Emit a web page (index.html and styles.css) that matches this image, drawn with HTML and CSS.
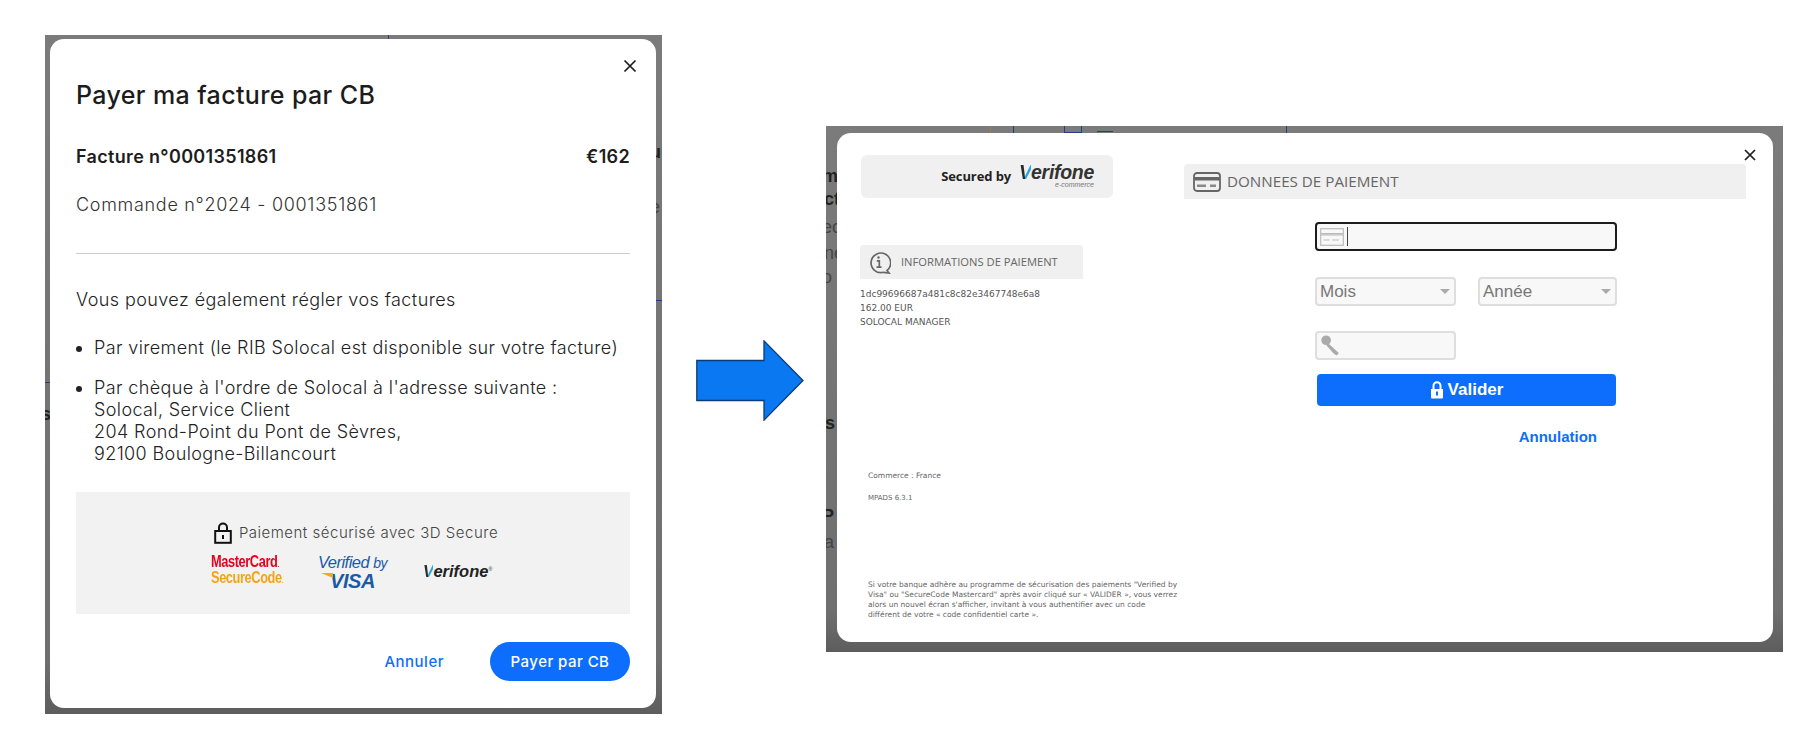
FILE: index.html
```html
<!DOCTYPE html>
<html lang="fr">
<head>
<meta charset="utf-8">
<title>Paiement par CB</title>
<link rel="stylesheet" href="styles.css">
</head>
<body>
<main class="canvas">

  <section class="frame frame-left">
    <i class="bg-mark lm1"></i><i class="bg-mark lm2"></i><i class="bg-mark lm3"></i>
    <span class="bg-text lt1">u</span><span class="bg-text lt2">e</span><span class="bg-text lt3">s</span>
    <div class="modal modal-cb">
      <svg class="close close-cb" viewBox="0 0 14 14"><path d="M1.5 1.5l11 11M12.5 1.5l-11 11"/></svg>
      <h1 class="cb-title">Payer ma facture par CB</h1>
      <div class="invoice-row"><span>Facture n°0001351861</span><span>€162</span></div>
      <p class="order">Commande n°2024 - 0001351861</p>
      <hr class="rule">
      <p class="also">Vous pouvez également régler vos factures</p>
      <ul class="methods">
        <li>Par virement (le RIB Solocal est disponible sur votre facture)</li>
        <li>Par chèque à l'ordre de Solocal à l'adresse suivante :<br>Solocal, Service Client<br>204 Rond-Point du Pont de Sèvres,<br>92100 Boulogne-Billancourt</li>
      </ul>
      <div class="secure-box">
        <div class="secure-line">
          <svg class="lock-icon" viewBox="0 0 18 22"><path d="M5 9V5.500a4 4 0 0 1 8 0V9" fill="none"/><rect x="1.200" y="9" width="15.600" height="11.800" fill="none"/><rect x="8" y="13" width="2" height="4" class="lock-pin"/></svg>
          <span>Paiement sécurisé avec 3D Secure</span>
        </div>
        <div class="logos">
          <div class="logo-mc"><span class="mc-red">MasterCard<small>.</small></span><span class="mc-orange">SecureCode<small>.</small></span></div>
          <div class="logo-visa"><span class="visa-top">Verified <em>by</em></span><span class="visa-bottom"><i class="visa-wedge"></i>VISA</span></div>
          <div class="logo-vf"><b class="vf-v">V</b>erifone<sup>®</sup></div>
        </div>
      </div>
      <div class="cb-actions">
        <a class="cb-cancel">Annuler</a>
        <button class="cb-pay">Payer par CB</button>
      </div>
    </div>
  </section>

  <svg class="arrow" viewBox="0 0 108 81"><path d="M.8 20.500H68V.9L107 40.500 68 80.100V60.500H.8z"/></svg>

  <section class="frame frame-right">
    <i class="bg-mark rm1"></i><i class="bg-mark rm2"></i><i class="bg-mark rm3"></i><i class="bg-mark rm4"></i><i class="bg-mark rm5"></i>
    <span class="bg-text rt1">m</span><span class="bg-text rt2">ct</span><span class="bg-text rt3">ec</span><span class="bg-text rt4">né</span><span class="bg-text rt5">o</span><span class="bg-text rt6">s</span><span class="bg-text rt7">P</span><span class="bg-text rt8">a</span>
    <div class="modal modal-vf">
      <svg class="close close-vf" viewBox="0 0 14 14"><path d="M2 2l10 10M12 2L2 12"/></svg>
      <div class="col-info">
        <div class="secured">
          <span class="secured-by">Secured by</span>
          <div class="secured-logo"><div class="logo-vf-big"><b class="vf-v">V</b>erifone</div><div class="ecom">e-commerce</div></div>
        </div>
        <div class="info-bar">
          <svg class="info-icon" viewBox="0 0 24 24"><path d="M20 20.500a9.800 9.800 0 1 0-3.500 1.800l5.500.7z" fill="none"/><circle cx="11.500" cy="7.500" r="1.200" class="fill"/><path d="M9.800 10.800h2.500v6.200M9.500 17.200h5" fill="none"/></svg>
          <span>INFORMATIONS DE PAIEMENT</span>
        </div>
        <p class="pay-data">1dc99696687a481c8c82e3467748e6a8<br>162.00 EUR<br>SOLOCAL MANAGER</p>
        <p class="commerce">Commerce : France</p>
        <p class="version">MPADS 6.3.1</p>
        <p class="legal">Si votre banque adhère au programme de sécurisation des paiements "Verified by<br>Visa" ou "SecureCode Mastercard" après avoir cliqué sur « VALIDER », vous verrez<br>alors un nouvel écran s'afficher, invitant à vous authentifier avec un code<br>différent de votre « code confidentiel carte ».</p>
      </div>
      <div class="col-form">
        <div class="data-bar">
          <svg class="bar-card" viewBox="0 0 28 20"><rect x="1" y="1" width="26" height="18" rx="3" fill="none"/><rect x="1" y="5" width="26" height="3.500" class="fill"/><rect x="4" y="12.500" width="9" height="2.500" class="fill-light"/><rect x="17" y="12.500" width="6" height="2.500" class="fill-light"/></svg>
          <span>DONNEES DE PAIEMENT</span>
        </div>
        <div class="form">
          <div class="field field-card">
            <svg class="field-card-icon" viewBox="0 0 24 18"><rect x=".7" y=".7" width="22.600" height="16.600" fill="none"/><path d="M1 5.500h22M1 6.800h22M3.500 12h6M12 12h7" fill="none"/></svg>
            <i class="caret"></i>
          </div>
          <div class="field-row">
            <div class="field field-half"><span>Mois</span><i class="tri"></i></div>
            <div class="field field-half field-year"><span>Année</span><i class="tri"></i></div>
          </div>
          <div class="field field-half field-cvv">
            <svg class="key-icon" viewBox="0 0 24 26"><circle cx="7" cy="7" r="5.500"/><path d="M9 10l12.500 11.500-2.500 3-3-2-1.500-1.500-7.500-8.500z"/></svg>
          </div>
          <button class="validate">
            <svg class="validate-lock" viewBox="0 0 14 18"><path d="M3.500 8V4.800a3.500 3.500 0 0 1 7 0V8" fill="none"/><path d="M1 8h12v8.500a1 1 0 0 1-1 1H2a1 1 0 0 1-1-1z" class="solid"/><rect x="6" y="10.500" width="2" height="4" class="pin"/></svg>
            Valider
          </button>
          <a class="annulation">Annulation</a>
        </div>
      </div>
    </div>
  </section>

</main>
</body>
</html>
```

FILE: styles.css
```css
* { box-sizing: border-box; }
html, body { margin: 0; padding: 0; background: #fff; }
.canvas { position: relative; width: 1815px; height: 754px; overflow: hidden; font-family: "Inter", "Liberation Sans", sans-serif; }

.frame { position: absolute; overflow: hidden; background: linear-gradient(#7b7b7b, #6f6f6f 92%, #5d5d5d); }
.frame-left { left: 45px; top: 35px; width: 617px; height: 679px; }
.frame-right { left: 826px; top: 126px; width: 957px; height: 526px; }

.bg-mark { position: absolute; display: block; background: #23407a; }
.lm1 { left: 343px; top: 0; width: 1px; height: 5px; }
.lm2 { left: 0; top: 347px; width: 5px; height: 1px; }
.lm3 { left: 611px; top: 265px; width: 6px; height: 1px; }
.rm1 { left: 164px; top: 0; width: 1px; height: 8px; background: #a08040; }
.rm2 { left: 187px; top: 0; width: 1px; height: 8px; }
.rm3 { left: 238px; top: 0; width: 18px; height: 7px; background: none; border: 1px solid #23407a; border-top: 0; }
.rm4 { left: 271px; top: 5px; width: 16px; height: 1px; }
.rm5 { left: 460px; top: 0; width: 1px; height: 8px; }

.bg-text { position: absolute; font: 600 18px/1 "Liberation Sans", sans-serif; color: #222; }
.lt1 { left: 605px; top: 108px; } .lt2 { left: 605px; top: 163px; color: #444; font-weight: 400; } .lt3 { left: -4px; top: 370px; }
.rt1 { left: -4px; top: 41px; } .rt2 { left: -2px; top: 64px; } .rt3 { left: -4px; top: 92px; color: #444; font-weight: 400; }
.rt4 { left: -2px; top: 118px; color: #444; font-weight: 400; } .rt5 { left: -4px; top: 142px; color: #444; font-weight: 400; }
.rt6 { left: -1px; top: 288px; } .rt7 { left: -4px; top: 381px; } .rt8 { left: -2px; top: 407px; color: #444; font-weight: 400; }

.modal { position: absolute; background: #fff; border-radius: 14px; }
.close { position: absolute; fill: none; stroke: #1d1d1d; stroke-width: 1.700; }

/* Solocal modal */
.modal-cb { left: 5px; top: 4px; width: 606px; height: 669px; padding: 0 26px; color: #222; }
.close-cb { left: 573px; top: 20px; width: 14px; height: 14px; }
.cb-title { margin: 40px 0 0; font-size: 25px; line-height: 32px; font-weight: 500; color: #1c1c1c; letter-spacing: .38px; }
.invoice-row { display: flex; justify-content: space-between; margin-top: 33px; font-size: 18px; line-height: 26px; font-weight: 600; color: #1d1d1d; letter-spacing: .33px; }
.order { margin: 22px 0 0; font-size: 18px; line-height: 26px; font-weight: 300; color: #333; letter-spacing: .7px; }
.rule { margin: 35px 0 0; border: 0; height: 1px; background: #ccc; }
.also { margin: 33px 0 0; font-size: 18px; line-height: 26px; font-weight: 300; color: #222; letter-spacing: .42px; }
.methods { margin: 24px 0 0; padding: 0 0 0 18px; font-size: 18px; line-height: 22px; font-weight: 300; letter-spacing: .38px; }
.methods li + li { margin-top: 18px; }
.secure-box { margin-top: 27px; height: 122px; background: #f2f2f2; padding-top: 29px; display: flex; flex-direction: column; align-items: center; }
.secure-line { display: flex; align-items: center; gap: 7px; margin-left: 6px; font-size: 15px; line-height: 24px; font-weight: 300; color: #444; letter-spacing: .5px; }
.lock-icon { width: 18px; height: 22px; stroke: #111; stroke-width: 2; }
.lock-pin { fill: #111; stroke: none; }
.logos { display: flex; align-items: center; margin-top: 8px; height: 36px; }
.logo-mc { display: flex; flex-direction: column; width: 70px; font: 700 16px/13.500px "Liberation Sans", sans-serif; letter-spacing: -.5px; }
.logo-mc span { display: block; white-space: nowrap; transform: scaleX(.8); transform-origin: left center; }
.logo-mc small { font-size: 8px; }
.mc-red { color: #e8001c; }
.mc-orange { color: #f5a418; }
.logo-visa { display: flex; flex-direction: column; align-items: center; width: 71px; margin-left: 36px; color: #1a5aa5; font-family: "Liberation Sans", sans-serif; font-style: italic; }
.visa-top { font-size: 16.500px; line-height: 18px; letter-spacing: -.5px; font-weight: 400; white-space: nowrap; }
.visa-top em { font-size: 14px; }
.visa-bottom { position: relative; font-size: 20px; line-height: 18px; font-weight: 700; letter-spacing: -.4px; }
.visa-wedge { position: absolute; left: -9px; top: 1px; border-style: solid; border-width: 5px 0 0 12px; border-color: #f2a91e transparent transparent transparent; }
.logo-vf { width: 72px; margin-left: 35px; font: italic 700 16.500px/1 "Liberation Sans", sans-serif; color: #222; }
.logo-vf sup { font-size: 5px; font-weight: 400; }
.vf-v { background: linear-gradient(90deg, #2a2a2a 48%, #23a6e6 48%); -webkit-background-clip: text; background-clip: text; color: transparent; font-weight: 700; }
.cb-actions { display: flex; justify-content: flex-end; align-items: center; margin-top: 28px; gap: 46px; }
.cb-cancel { font-size: 15px; font-weight: 500; color: #0d6efd; letter-spacing: .5px; }
.cb-pay { width: 140px; height: 39px; border: 0; border-radius: 20px; background: #0d6efd; color: #fff; font: 500 15px "Inter", sans-serif; letter-spacing: .45px; }

/* Arrow */
.arrow { position: absolute; left: 696px; top: 340px; width: 108px; height: 81px; }
.arrow path { fill: #0a78f0; stroke: #0b3a78; stroke-width: 1.300; }

/* Verifone modal */
.modal-vf { left: 11px; top: 7px; width: 936px; height: 509px; padding: 22px 27px 0 23px; display: flex; color: #666; font-family: "DejaVu Sans", sans-serif; }
.close-vf { left: 906px; top: 15px; width: 14px; height: 14px; }
.col-info { width: 324px; flex: none; }
.secured { display: flex; align-items: center; justify-content: flex-end; gap: 8px; width: 252px; height: 43px; margin-left: 1px; padding: 0 19px 0 0; border-radius: 6px; background: #f0f0f0; }
.secured-by { font: 700 13px/1 "Open Sans", sans-serif; color: #222; letter-spacing: -.1px; }
.secured-logo { margin-bottom: 2px; }
.logo-vf-big { font: italic 700 19.500px/18px "Liberation Sans", sans-serif; color: #333; letter-spacing: -.3px; }
.ecom { font: italic 400 7px/7px "Liberation Sans", sans-serif; color: #777; text-align: right; }
.info-bar { display: flex; align-items: center; gap: 10px; width: 223px; height: 34px; margin-top: 47px; padding-left: 7px; background: #f0f0f0; border-radius: 4px 4px 0 0; font: 400 11.200px/1 "Open Sans", sans-serif; color: #666; }
.info-icon { width: 24px; height: 24px; stroke: #666; stroke-width: 1.700; }
.fill { fill: #666; stroke: none; }
.pay-data { margin: 8px 0 0; font-size: 9px; line-height: 14px; color: #555; }
.commerce { margin: 142px 0 0 8px; font-size: 7.500px; line-height: 10px; color: #666; }
.version { margin: 12px 0 0 8px; font-size: 7px; line-height: 10px; color: #666; }
.legal { margin: 77px 0 0 8px; font-size: 7.500px; line-height: 10px; color: #666; white-space: nowrap; }
.col-form { flex: 1; padding-top: 9px; }
.data-bar { display: flex; align-items: center; gap: 6px; height: 35px; padding-left: 9px; background: #f0f0f0; border-radius: 4px 4px 0 0; font: 400 15.200px/1 "Open Sans", sans-serif; color: #666; }
.bar-card { width: 28px; height: 20px; stroke: #666; stroke-width: 1.800; }
.fill-light { fill: #888; stroke: none; }
.form { margin: 23px 0 0 131px; width: 302px; display: flex; flex-direction: column; }
.field { position: relative; display: flex; align-items: center; height: 29px; padding-left: 3px; background: #f8f8f8; border: 2px solid #dedede; border-radius: 4px; font: 400 17px/1 "Liberation Sans", sans-serif; color: #777; }
.field-card { border-color: #1c1c1c; gap: 3px; padding-left: 3px; }
.field-card-icon { width: 24px; height: 18px; stroke: #bbb; stroke-width: 1.200; }
.caret { display: block; width: 1px; height: 19px; background: #444; }
.field-row { display: flex; justify-content: space-between; margin-top: 26px; }
.field-half { width: 141px; }
.field-year { width: 139px; }
.tri { position: absolute; right: 4px; top: 10px; border: 5px solid transparent; border-top: 5px solid #aaa; border-bottom: 0; }
.field-cvv { margin-top: 25px; padding-left: 3px; }
.key-icon { width: 21px; height: 23px; fill: #aaa; }
.validate { display: flex; align-items: center; justify-content: center; gap: 4px; width: 299px; height: 32px; margin: 14px 0 0 2px; border: 0; border-radius: 4px; background: #0d6efd; color: #fff; font: 700 17px "Liberation Sans", sans-serif; }
.validate-lock { width: 14px; height: 18px; stroke: #fff; stroke-width: 2; }
.solid { fill: #fff; stroke: none; }
.pin { fill: #0d6efd; stroke: none; }
.annulation { align-self: flex-end; margin: 23px 20px 0 0; font: 700 15px/16px "Liberation Sans", sans-serif; color: #0d6efd; }
```
